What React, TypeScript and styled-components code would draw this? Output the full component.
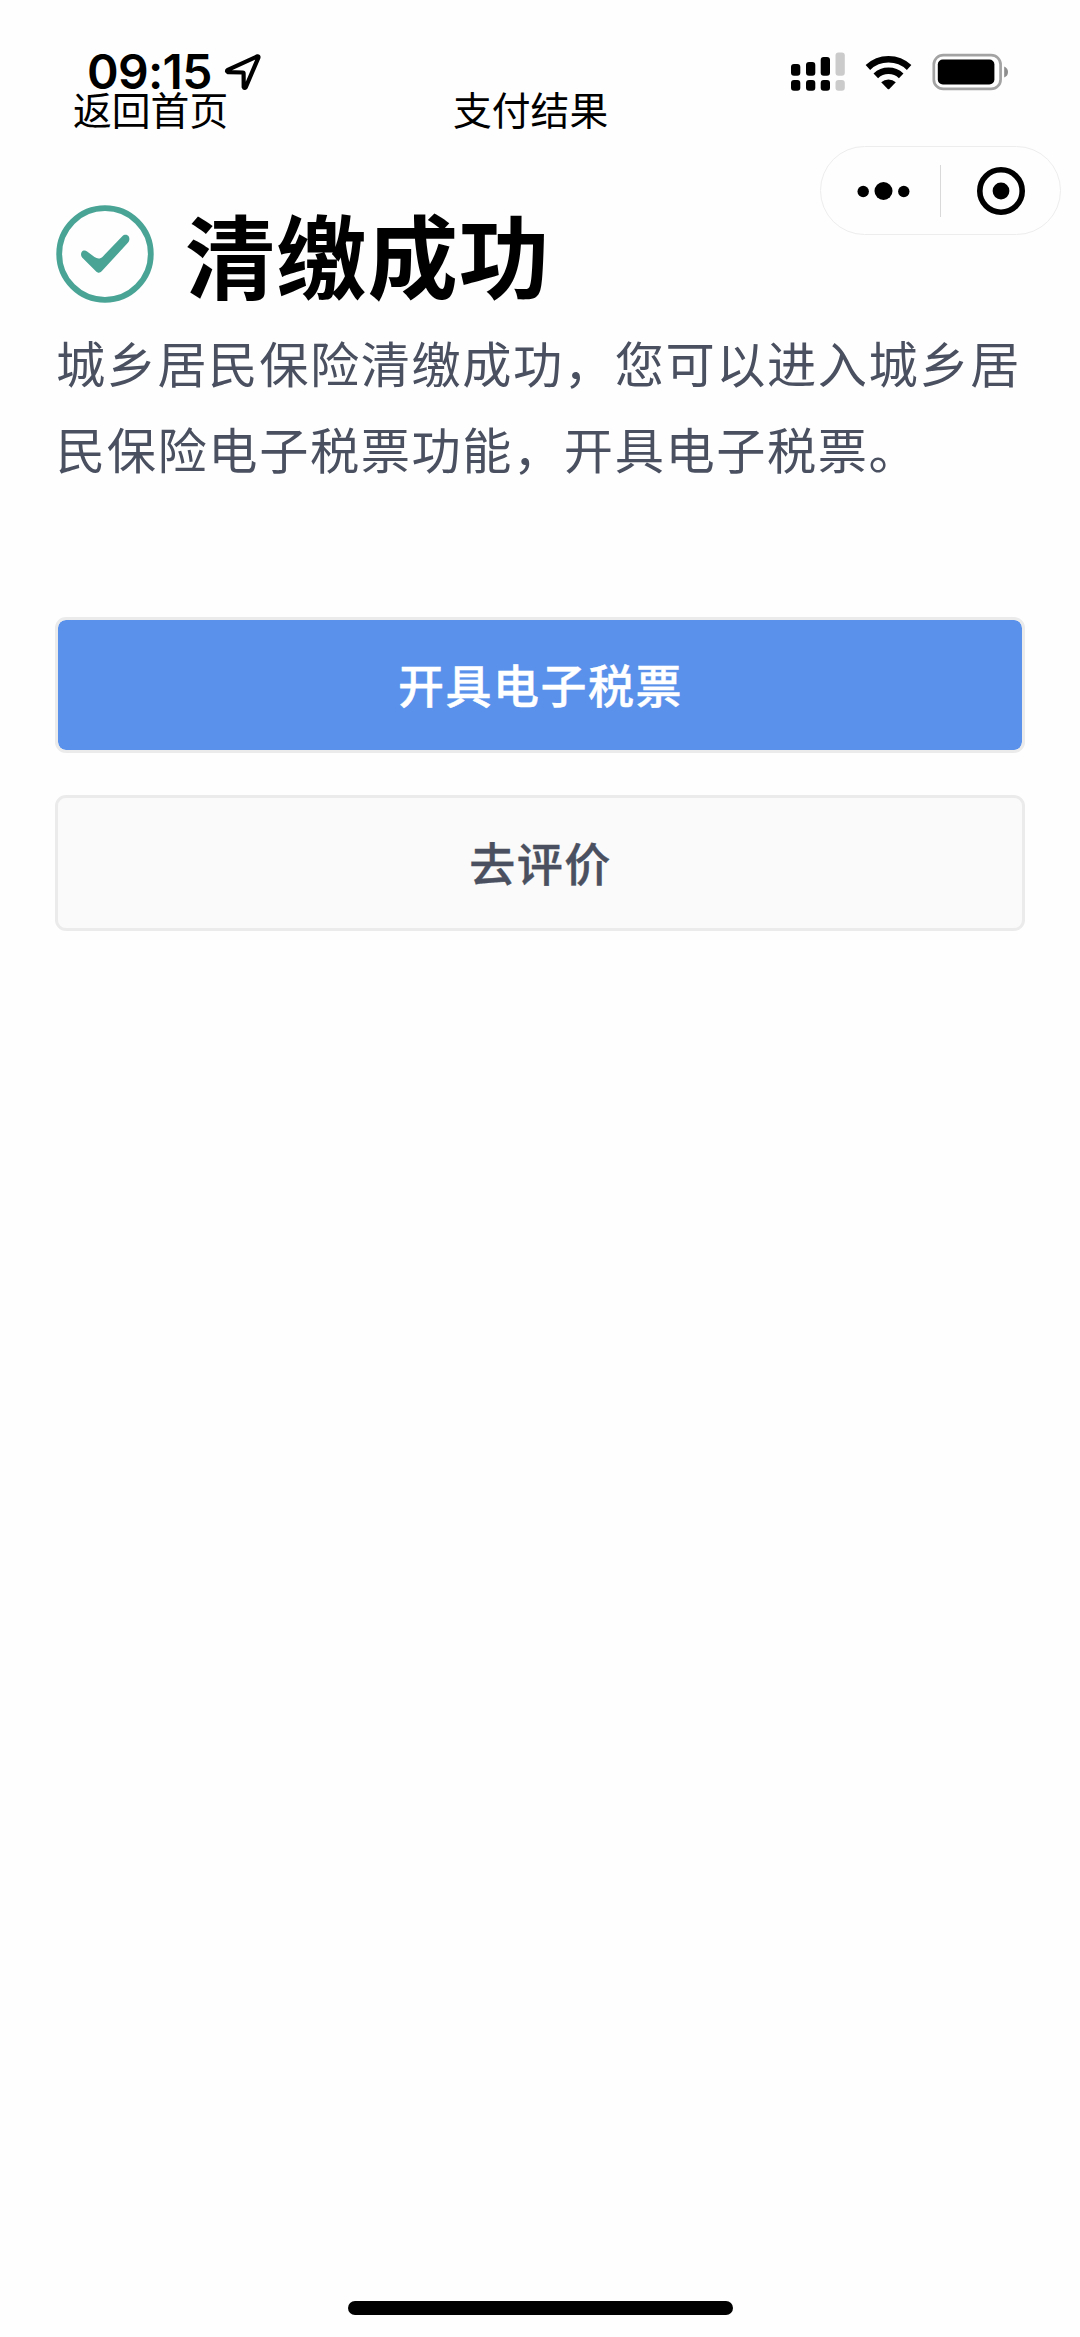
import React from 'react';
import styled, { createGlobalStyle } from 'styled-components';

const GlobalStyle = createGlobalStyle`
  * { box-sizing: border-box; }
  body {
    margin: 0;
    background: #fefefe;
    font-family: "Noto Sans CJK SC", "Noto Sans", sans-serif;
    color: #000;
  }
`;

const Screen = styled.div`
  position: relative;
  display: flex;
  flex-direction: column;
  width: 1080px;
  height: 2337px;
  background: #fefefe;
  overflow: hidden;
`;

const StatusBar = styled.header`
  display: flex;
  justify-content: space-between;
  align-items: center;
  height: 93px;
  padding: 50px 70px 0 87px;
`;

const Clock = styled.div`
  display: flex;
  align-items: center;
  gap: 11px;
`;

const Time = styled.span`
  width: 126px;
  font-family: Inter, "Liberation Sans", sans-serif;
  font-size: 48px;
  font-weight: 600;
  line-height: 43px;
  letter-spacing: -0.7px;
  white-space: nowrap;
`;

const Indicators = styled.div`
  display: flex;
  align-items: center;
  gap: 20px;
`;

const Glyph = styled.svg`
  display: block;
  flex: none;
  overflow: visible;
`;

const NavBar = styled.nav`
  display: grid;
  grid-template-columns: 380px 1fr 380px;
  height: 32px;
  padding: 0 73px;
  font-size: 38.8px;
  line-height: 31px;
  white-space: nowrap;
`;

const NavTitle = styled.span`
  text-align: left;
`;

const Capsule = styled.div`
  position: absolute;
  top: 146px;
  left: 820px;
  display: flex;
  align-items: center;
  width: 241px;
  height: 89px;
  border: 1px solid #ededed;
  border-radius: 45px;
`;

const CapsuleHalf = styled.div<{ $shift?: number }>`
  display: flex;
  width: 119px;
  align-items: center;
  justify-content: center;
  padding-left: ${({ $shift = 0 }) => $shift}px;
`;

const CapsuleDivider = styled.div`
  width: 1px;
  height: 52px;
  background: #d9d9d9;
`;

const Content = styled.main`
  display: flex;
  flex: 1;
  flex-direction: column;
  padding: 75px 55px 0;
`;

const ResultHeading = styled.div`
  display: flex;
  align-items: center;
  gap: 31px;
  height: 108px;
  padding-left: 1px;
`;

const ResultTitle = styled.h1`
  margin: 0;
  font-size: 90.4px;
  font-weight: 700;
  line-height: 106px;
  letter-spacing: 0.9px;
  padding-bottom: 2px;
`;

const Message = styled.p`
  margin: 11px -10px 0 0;
  padding-left: 1px;
  color: #4a5060;
  font-size: 49.2px;
  line-height: 86px;
  letter-spacing: 1.6px;
`;

const Actions = styled.div`
  display: flex;
  flex-direction: column;
  gap: 42px;
  margin-top: 126px;
`;

const ActionButton = styled.button<{ $primary?: boolean }>`
  display: flex;
  align-items: center;
  justify-content: center;
  width: 970px;
  height: 136px;
  padding: 0 0 5px 1px;
  border: 3px solid #ebebeb;
  border-radius: 11px;
  background: ${({ $primary }) => ($primary ? '#5991eb' : '#fafafa')};
  background-clip: padding-box;
  color: ${({ $primary }) => ($primary ? '#fff' : '#4a5060')};
  font-family: inherit;
  font-size: 46px;
  font-weight: 500;
  letter-spacing: 1.5px;
  -webkit-text-stroke: 0.4px currentColor;
`;

const HomeIndicator = styled.div`
  align-self: center;
  width: 385px;
  height: 14px;
  margin-bottom: 22px;
  border-radius: 7px;
  background: #000;
`;

const LocationArrow = () => (
  <Glyph width="38" height="38" viewBox="224 53 38 38">
    <path
      d="M257.2 56.4 L227.8 69.9 Q226 71.4 228.2 72.2 L242.8 72.5 Q243.6 72.5 243.6 73.3 L243.7 87 Q244.4 88.8 245.8 87.1 L258.4 57.6 Q258.8 56 257.2 56.4 Z"
      fill="none"
      stroke="#000"
      strokeWidth="4.2"
      strokeLinejoin="round"
    />
  </Glyph>
);

const bars = [
  { x: 790, top: 64, color: '#000' },
  { x: 805, top: 62, color: '#000' },
  { x: 819.7, top: 57, color: '#000' },
  { x: 834.5, top: 52.6, color: '#cbcbcb' },
];

const SignalIcon = () => (
  <Glyph width="54" height="40" viewBox="790 52 54 40">
    {bars.map(({ x, top, color }) => (
      <g key={x} fill={color}>
        <rect x={x} y={top} width="9.3" height={75.8 - top} rx="3" />
        <rect x={x} y="80" width="9.3" height="10.8" rx="3" />
      </g>
    ))}
  </Glyph>
);

const WifiIcon = () => (
  <Glyph width="47" height="36" viewBox="864 53 47 36">
    <g fill="none" stroke="#000" strokeWidth="6.6">
      <path d="M866.9 66.5 A30 30 0 0 1 908.1 66.5" />
      <path d="M874.8 74.8 A18.4 18.4 0 0 1 900.2 74.8" />
    </g>
    <path d="M880.2 81.2 A11 11 0 0 1 894.8 81.2 L888.3 87.9 Q887.5 88.6 886.7 87.9 Z" fill="#000" />
  </Glyph>
);

const BatteryIcon = () => (
  <Glyph width="78" height="38" viewBox="931 52.5 78 38">
    <rect x="932.8" y="54.6" width="66.8" height="33.8" rx="9.5" fill="none" stroke="#a3a3a3" strokeWidth="2.7" />
    <rect x="936.8" y="59" width="56.6" height="25" rx="5" fill="#000" />
    <path d="M1003.2 66 Q1007 67.5 1007 71.5 Q1007 75.5 1003.2 77 Z" fill="#8e8e8e" />
  </Glyph>
);

const MoreIcon = () => (
  <Glyph width="54" height="18" viewBox="857 182.5 54 18">
    <circle cx="863.2" cy="192" r="5.7" />
    <circle cx="883.5" cy="191.5" r="9" />
    <circle cx="903.8" cy="192" r="5.7" />
  </Glyph>
);

const CloseIcon = () => (
  <Glyph width="48" height="48" viewBox="0 0 48 48">
    <circle cx="24" cy="24" r="21.2" fill="none" stroke="#000" strokeWidth="5.6" />
    <circle cx="24" cy="24" r="8.4" />
  </Glyph>
);

const SuccessIcon = () => (
  <Glyph width="98" height="98" viewBox="55.5 205.4 98 98">
    <circle cx="104.5" cy="254.4" r="45.8" fill="none" stroke="#4aa496" strokeWidth="5.8" />
    <path
      d="M81.6 258 C79.6 255.4 80.6 251.8 83 251 C84.4 250.6 85.4 251 86.6 251.9 L94 257.4 C97 259.4 99.8 259.4 102.4 256.8 L121.8 236.6 C124 234.4 127 234.8 128.3 237 C129.4 239.2 128.9 241.4 127.4 243.2 L101.4 271.4 C99.2 273.6 97.6 273.6 95.4 271.6 Z"
      fill="#4aa496"
    />
  </Glyph>
);

export default function App() {
  return (
    <>
      <GlobalStyle />
      <Screen>
        <StatusBar>
          <Clock>
            <Time>09:15</Time>
            <LocationArrow />
          </Clock>
          <Indicators>
            <SignalIcon />
            <WifiIcon />
            <BatteryIcon />
          </Indicators>
        </StatusBar>
        <NavBar>
          <span>返回首页</span>
          <NavTitle>支付结果</NavTitle>
        </NavBar>
        <Capsule>
          <CapsuleHalf $shift={6}>
            <MoreIcon />
          </CapsuleHalf>
          <CapsuleDivider />
          <CapsuleHalf $shift={1}>
            <CloseIcon />
          </CapsuleHalf>
        </Capsule>
        <Content>
          <ResultHeading>
            <SuccessIcon />
            <ResultTitle>清缴成功</ResultTitle>
          </ResultHeading>
          <Message>城乡居民保险清缴成功，您可以进入城乡居民保险电子税票功能，开具电子税票。</Message>
          <Actions>
            <ActionButton $primary>开具电子税票</ActionButton>
            <ActionButton>去评价</ActionButton>
          </Actions>
        </Content>
        <HomeIndicator />
      </Screen>
    </>
  );
}
